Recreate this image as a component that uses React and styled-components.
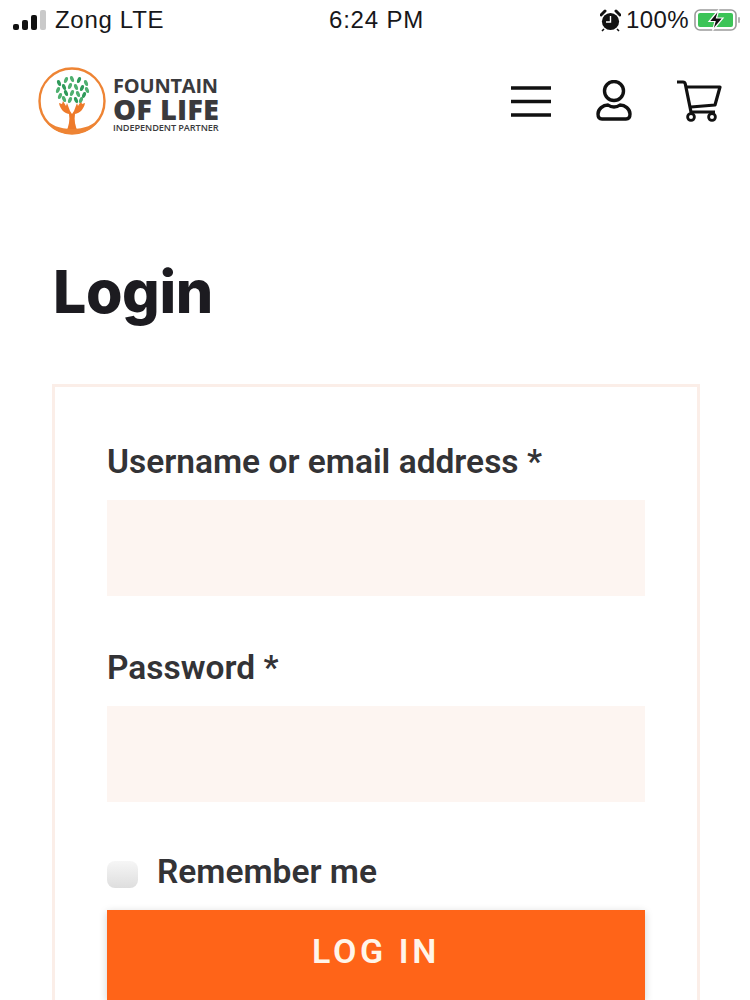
import React from "react";
import styled, { createGlobalStyle } from "styled-components";

const Global = createGlobalStyle`
  html, body { margin: 0; padding: 0; background: #fff; height: 1000px; overflow: hidden; }
  * { box-sizing: border-box; }
`;
const Page = styled.div`
  width: 750px; height: 1000px; overflow: hidden; background: #fff; color: #2f2f33;
  font-family: Roboto, "Liberation Sans", sans-serif;
`;
const StatusBar = styled.div`
  height: 40px; display: grid; grid-template-columns: 1fr auto 1fr; align-items: center;
  padding: 0 9px 0 12px; font-family: "Liberation Sans", Inter, sans-serif; font-size: 24px; color: #17171a;
`;
const StatusLeft = styled.div`display: flex; align-items: center; gap: 7px; letter-spacing: .7px;`;
const StatusRight = styled.div`display: flex; align-items: center; justify-content: flex-end; gap: 5px; letter-spacing: .4px;`;
const Clock = styled.div`letter-spacing: .8px;`;
const Header = styled.header`
  height: 124px; padding: 0 28px 0 38px; display: flex; align-items: flex-start; justify-content: space-between;
`;
const Brand = styled.div`display: flex; align-items: center; gap: 7px; padding-top: 26px;`;
const BrandText = styled.div`display: flex; flex-direction: column; color: #3a3a3d; font-family: "Open Sans", sans-serif; padding-top: 6px;`;
const BrandSmall = styled.span`font-size: 20px; line-height: 20px; font-weight: 700; letter-spacing: -.2px;`;
const BrandBig = styled.span`font-size: 29px; line-height: 26px; font-weight: 800; letter-spacing: .2px;`;
const BrandTag = styled.span`font-size: 9.2px; line-height: 11px; font-weight: 600; letter-spacing: -.1px;`;
const Tools = styled.div`display: flex; align-items: center; gap: 44px; padding-top: 40px;`;
const Main = styled.main`padding: 0 50px 0 52px;`;
const Title = styled.h1`
  margin: 92px 0 0; font-family: Inter, "Open Sans", sans-serif; font-size: 59px; line-height: 72px; font-weight: 800;
  color: #1c1b20; letter-spacing: -.4px; height: 128px; padding-left: 1px;
`;
const Card = styled.section`
  border: 3px solid #fbeee8; border-bottom: 0; padding: 55px 52px 0; height: 620px; display: flex; flex-direction: column;
`;
const Label = styled.label`font-size: 33.5px; line-height: 40px; font-weight: 600; display: block; height: 58px; color: #333336;`;
const Input = styled.div`height: 96px; background: #fdf5f1; margin-bottom: 52px;`;
const Remember = styled.div`display: flex; align-items: center; gap: 19px; height: 40px; margin-top: -3px; font-size: 33.5px; font-weight: 600; color: #333336;`;
const Check = styled.span`width: 31px; height: 27px; margin-top: 6px; border-radius: 8px; background: linear-gradient(#f6f6f6, #dedede);`;
const Button = styled.button`
  margin-top: 19px; height: 90px; flex: none; border: 0; background: #ff6418; color: #fff5ea; font-family: Roboto, sans-serif;
  font-size: 34px; font-weight: 600; letter-spacing: 3.6px; box-shadow: 0 2px 8px rgba(0,0,0,.18); padding: 0 0 8px;
`;

const Signal = () => (
  <svg width="36" height="20" viewBox="0 0 36 20">
    <rect x="1" y="14" width="6" height="6" rx="2" fill="#111" />
    <rect x="10" y="10" width="6" height="10" rx="2" fill="#111" />
    <rect x="19" y="5" width="6" height="15" rx="2" fill="#111" />
    <rect x="28" y="0" width="6" height="20" rx="2" fill="#c9c9c9" />
  </svg>
);
const Alarm = () => (
  <svg width="21" height="23" viewBox="0 0 21 23">
    <circle cx="10.5" cy="12.5" r="8.6" fill="#111" />
    <path d="M10.5 7v6H6" fill="none" stroke="#fff" strokeWidth="1.4" />
    <path d="M1 6l4-4M20 6l-4-4" stroke="#111" strokeWidth="3" strokeLinecap="round" />
    <path d="M4 20l-2 2M17 20l2 2" stroke="#111" strokeWidth="1.6" />
  </svg>
);
const Battery = () => (
  <svg width="47" height="24" viewBox="0 0 47 24">
    <rect x="1" y="2" width="41" height="20" rx="5" fill="#fff" stroke="#9b9b9b" strokeWidth="1.6" />
    <rect x="4" y="5" width="35" height="14" rx="2" fill="#3cc457" />
    <rect x="44" y="9" width="2" height="6" rx="1" fill="#b5b5b5" />
    <path d="M25 1.5L15 13.5h6l-2.5 9L29 10h-6.5z" fill="#111" stroke="#fff" strokeWidth="1.2" />
  </svg>
);
const Logo = () => (
  <svg width="68" height="70" viewBox="0 0 68 70">
    <circle cx="34" cy="35" r="32.5" fill="#fff" stroke="#ee8434" strokeWidth="2.4" />
    <path d="M28 66c3-6 4-12 3-18-5-1-9-5-10-11l3 1 1-3 3 5 1-3 3 8 2 3 2-3 3-8 1 3 3-5 1 3 3-1c-1 6-5 10-10 11-1 6 0 12 3 18z" fill="#ee7a2a" />
    <path d="M6 52c7 7 15 11 28 11s21-4 28-11c-6 11-16 16-28 16S12 63 6 52z" fill="#ee8434" />
    {[[21,17],[28,14],[34,13],[41,14],[48,17],[20,24],[26,21],[32,20],[38,21],[44,22],[49,24],[22,30],[28,27],[34,27],[40,28],[46,29],[26,33],[32,34],[38,34],[43,34]].map(([x,y],i)=>(
      <ellipse key={i} cx={x} cy={y} rx="1.8" ry="3.2" fill={i%3===0?"#2f9a5a":"#4fb070"} transform={`rotate(${i%2?20:-20} ${x} ${y})`} />
    ))}
  </svg>
);
const Menu = () => (
  <svg width="42" height="34" viewBox="0 0 42 34">
    <path d="M1 4h40M1 17.5h40M1 31h40" stroke="#111" strokeWidth="3.4" />
  </svg>
);
const User = () => (
  <svg width="36" height="42" viewBox="0 0 36 42">
    <circle cx="18" cy="11" r="9.5" fill="none" stroke="#111" strokeWidth="3.4" />
    <path d="M2 34c0-5 5-9 10-9 2 1.5 4 2 6 2s4-.5 6-2c5 0 10 4 10 9 0 3-1 5-4 5H6c-3 0-4-2-4-5z" fill="none" stroke="#111" strokeWidth="3.4" strokeLinejoin="round" />
  </svg>
);
const Cart = () => (
  <svg width="46" height="42" viewBox="0 0 46 42">
    <path d="M1 2h6c1 0 2 .7 2.3 2L15 32h24" fill="none" stroke="#111" strokeWidth="3.2" />
    <path d="M10 7h34l-5 18-24 2" fill="none" stroke="#111" strokeWidth="3.2" strokeLinejoin="round" />
    <circle cx="15" cy="37" r="3.4" fill="none" stroke="#111" strokeWidth="2.8" />
    <circle cx="36" cy="37" r="3.4" fill="none" stroke="#111" strokeWidth="2.8" />
  </svg>
);

export default function App() {
  return (
    <Page>
      <Global />
      <StatusBar>
        <StatusLeft><Signal />Zong LTE</StatusLeft>
        <Clock>6:24 PM</Clock>
        <StatusRight><Alarm />100%<Battery /></StatusRight>
      </StatusBar>
      <Header>
        <Brand>
          <Logo />
          <BrandText>
            <BrandSmall>FOUNTAIN</BrandSmall>
            <BrandBig>OF LIFE</BrandBig>
            <BrandTag>INDEPENDENT PARTNER</BrandTag>
          </BrandText>
        </Brand>
        <Tools><Menu /><User /><Cart /></Tools>
      </Header>
      <Main>
        <Title>Login</Title>
        <Card>
          <Label>Username or email address *</Label>
          <Input />
          <Label>Password *</Label>
          <Input />
          <Remember><Check />Remember me</Remember>
          <Button>LOG IN</Button>
        </Card>
      </Main>
    </Page>
  );
}
